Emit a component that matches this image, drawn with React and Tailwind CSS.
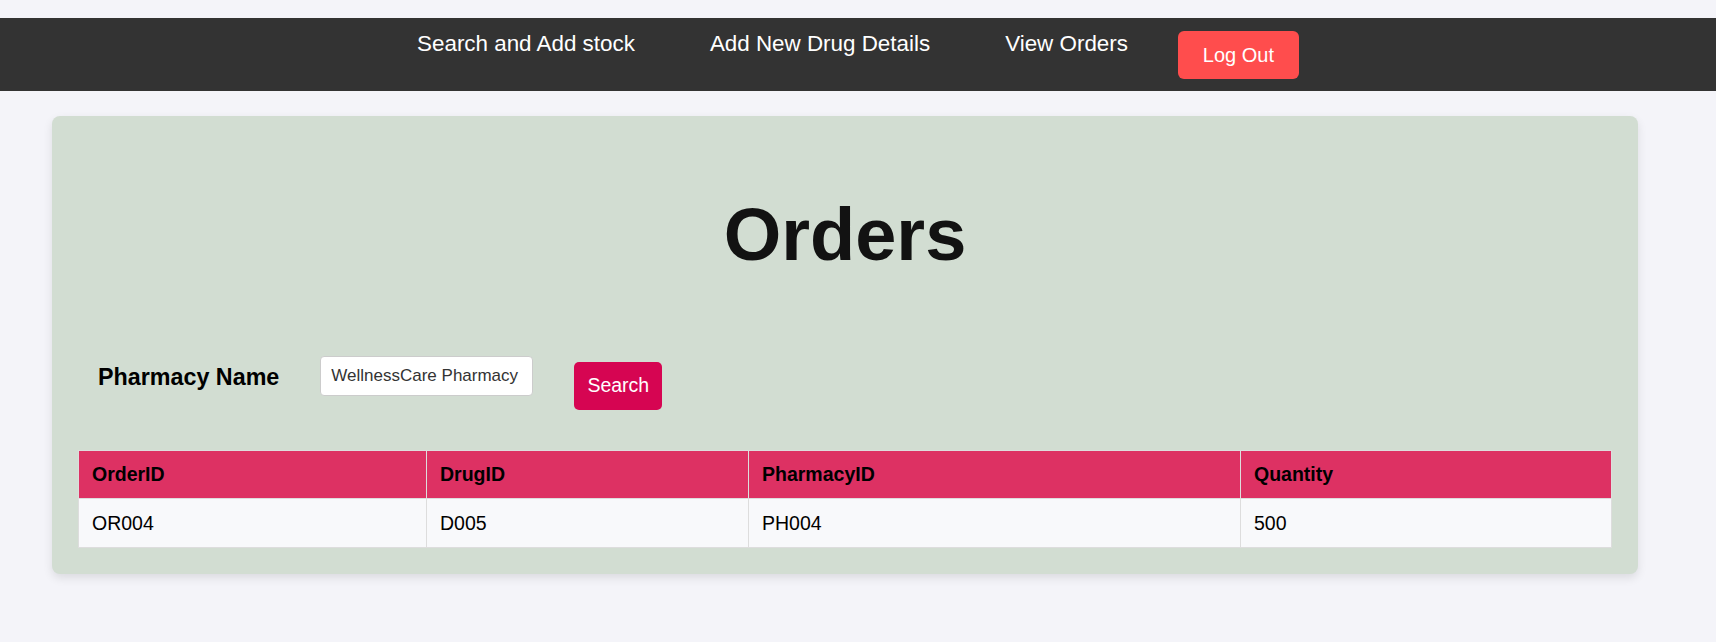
import React, { useState } from 'react';

// orders view for the pharmacy admin
const navLinks = ['Search and Add stock', 'Add New Drug Details', 'View Orders'];

const orders = [{ orderId: 'OR004', drugId: 'D005', pharmacyId: 'PH004', quantity: 500 }];

const Navbar = () => (
    <nav className="flex h-[73px] items-start justify-center bg-[#333333] pt-[13px]">
        {navLinks.map((label, i) => (
            <a
                key={label}
                href="#"
                className={`text-[22.4px] leading-[25px] text-white ${i < navLinks.length - 1 ? 'mr-[75px]' : 'mr-[50px]'}`}
            >
                {label}
            </a>
        ))}
        <button className="h-[48px] w-[121px] rounded-[6px] bg-[#ff4d4d] text-[20px] text-white">Log Out</button>
    </nav>
);

const App = () => {
    const [pharmacy, setPharmacy] = useState('WellnessCare Pharmacy');

    return (
        <div className="min-h-screen bg-[#f4f4f9] pt-[18px] font-['Liberation_Sans',Arial,sans-serif]">
            <Navbar />

            <div className="ml-[52px] mt-[25px] w-[1586px] rounded-[8px] bg-[#d2ddd2] px-[26px] pb-[26px] pt-[25px] shadow-[0_4px_10px_rgba(0,0,0,0.1)]">
                <h1 className="mt-[51px] text-center text-[74px] font-bold leading-[85px] text-[#121212]">Orders</h1>

                <div className="mt-[79px] flex items-start gap-[41px] pl-[20px]">
                    <h3 className="mt-[8px] text-[23.3px] font-bold leading-[27px] text-black">Pharmacy Name</h3>
                    <input
                        type="text"
                        value={pharmacy}
                        onChange={(e) => setPharmacy(e.target.value)}
                        className="h-[40px] w-[213px] rounded-[4px] border border-[#cccccc] bg-white pl-[10px] pr-[6px] text-[17px] text-[#333] outline-none"
                    />
                    <button className="mt-[6px] h-[48px] w-[88px] rounded-[5px] bg-[#d60552] text-[19.5px] text-white">Search</button>
                </div>

                <table className="mt-[40px] w-full table-fixed border-collapse text-[19.5px] text-black">
                    <colgroup>
                        <col className="w-[348px]" />
                        <col className="w-[322px]" />
                        <col className="w-[492px]" />
                        <col />
                    </colgroup>
                    <thead>
                        <tr className="h-[48px] bg-[#dd3163]">
                            <th className="border border-[#dddddd] px-[13px] text-left font-bold">OrderID</th>
                            <th className="border border-[#dddddd] px-[13px] text-left font-bold">DrugID</th>
                            <th className="border border-[#dddddd] px-[13px] text-left font-bold">PharmacyID</th>
                            <th className="border border-[#dddddd] px-[13px] text-left font-bold">Quantity</th>
                        </tr>
                    </thead>
                    <tbody>
                        {orders.map((o) => (
                            <tr key={o.orderId} className="h-[49px] bg-[#f8f9fb]">
                                <td className="border border-[#dddddd] px-[13px] pt-[2px]">{o.orderId}</td>
                                <td className="border border-[#dddddd] px-[13px] pt-[2px]">{o.drugId}</td>
                                <td className="border border-[#dddddd] px-[13px] pt-[2px]">{o.pharmacyId}</td>
                                <td className="border border-[#dddddd] px-[13px] pt-[2px]">{o.quantity}</td>
                            </tr>
                        ))}
                    </tbody>
                </table>
            </div>
        </div>
    );
};

export default App;
